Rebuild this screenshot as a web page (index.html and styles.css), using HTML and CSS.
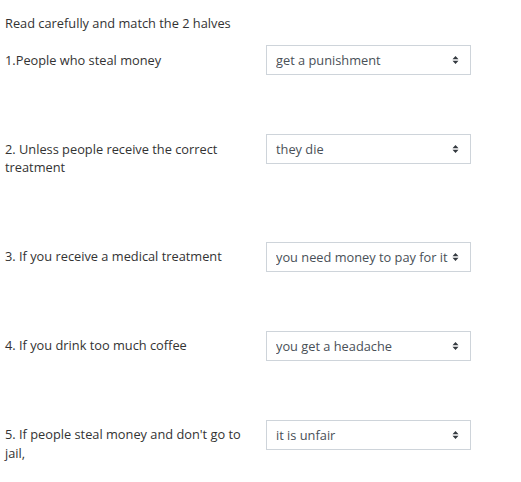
FILE: index.html
```html
<!DOCTYPE html>
<html>
<head>
<meta charset="utf-8">
<link rel="stylesheet" href="styles.css">
</head>
<body>
<div class="page">
  <p class="intro">Read carefully and match the 2 halves</p>
  <div class="rows">
    <div class="row">
      <label class="prompt">1.People who steal money</label>
      <select class="choice"><option>get a punishment</option></select>
    </div>
    <div class="row">
      <label class="prompt">2. Unless people receive the correct treatment</label>
      <select class="choice"><option>they die</option></select>
    </div>
    <div class="row">
      <label class="prompt">3. If you receive a medical treatment</label>
      <select class="choice"><option>you need money to pay for it</option></select>
    </div>
    <div class="row">
      <label class="prompt">4. If you drink too much coffee</label>
      <select class="choice"><option>you get a headache</option></select>
    </div>
    <div class="row">
      <label class="prompt">5. If people steal money and don't go to jail,</label>
      <select class="choice"><option>it is unfair</option></select>
    </div>
  </div>
</div>
</body>
</html>
```
FILE: styles.css
```css
html, body {
  margin: 0;
  padding: 0;
  background: #ffffff;
}
body {
  font-family: "Open Sans", "Liberation Sans", sans-serif;
  font-size: 12.8px;
  line-height: 18.5px;
  color: #333333;
}
.page {
  padding: 14px 5px 0 5px;
}
.intro {
  margin: 0 0 12.5px 0;
}
.rows {
  display: flex;
  flex-direction: column;
  gap: 59px;
}
.row {
  display: flex;
  align-items: flex-start;
}
.prompt {
  flex: 0 0 256px;
  padding: 5.75px 0;
}
.choice {
  -webkit-appearance: none;
  appearance: none;
  margin: 0 0 0 5px;
  width: 205px;
  height: 30px;
  box-sizing: border-box;
  border: 1px solid #ced4da;
  border-radius: 0;
  background-color: #ffffff;
  background-image: url("data:image/svg+xml,%3Csvg xmlns='http://www.w3.org/2000/svg' width='7' height='8' viewBox='0 0 7 8'%3E%3Cpath d='M3.5 0L6.5 3.2H0.5Z M3.5 8L6.5 4.8H0.5Z' fill='%23343a40'/%3E%3C/svg%3E");
  background-repeat: no-repeat;
  background-position: right 11px center;
  background-size: 7px 8px;
  padding: 0 20px 0 9px;
  font-family: "Open Sans", "Liberation Sans", sans-serif;
  font-size: 12.8px;
  color: #495057;
}
```
